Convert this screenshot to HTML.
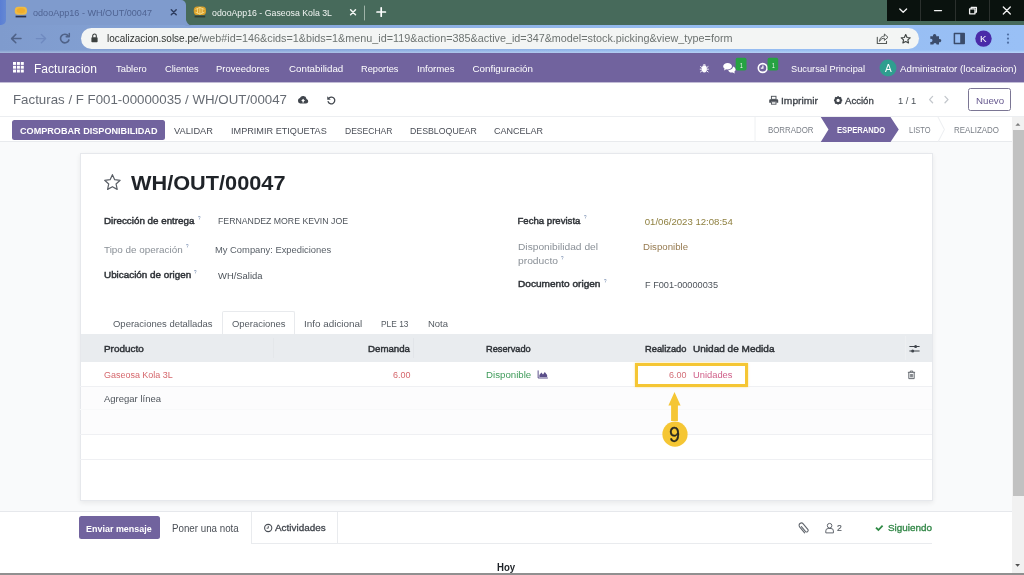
<!DOCTYPE html>
<html>
<head>
<meta charset="utf-8">
<title>odooApp16 - WH/OUT/00047</title>
<style>
*{box-sizing:border-box;margin:0;padding:0}
html,body{width:1024px;height:575px;overflow:hidden;background:#fff;font-family:"Liberation Sans",sans-serif;}
body{position:relative;color:#495057;font-size:9.4px;}
.abs{position:absolute;white-space:pre;line-height:1;transform-origin:0 0;}
svg{position:absolute;overflow:visible}
#root{position:absolute;left:0;top:0;width:1024px;height:575px;overflow:hidden;will-change:transform;background:#fff;}
#tabstrip{left:0;top:0;width:1024px;height:26px;background:#476a5b;}
#winedge{left:0;top:0;width:16px;height:26px;background:#7f9bcd;}
#tab1{left:6px;top:0;width:180px;height:26px;background:#7f9bcd;border-radius:7px 5px 0 0;}
#toolbar{left:0;top:25px;width:1024px;height:28px;background:linear-gradient(90deg,#7f9bcd 0%,#88a8dc 30%,#95bbef 65%,#99c0f6 100%);}
#omni{left:81px;top:28px;width:838px;height:21px;border-radius:11px;background:#f3f5f4;}
#winctl{left:887px;top:0;width:137px;height:21px;background:#0a120e;}
#nav{left:0;top:53px;width:1024px;height:29px;background:#71639e;border-bottom:0;box-shadow:0 1px 0 #c2bcd6;}
#cp{left:0;top:83px;width:1024px;height:34px;background:#fff;border-bottom:1px solid #eceef1;}
#sb{left:0;top:117px;width:1012px;height:25px;background:#fff;border-bottom:1px solid #e8eaed;}
#content{left:0;top:142px;width:1012px;height:369px;background:#f9fafb;}
#sheet{left:79.5px;top:152.5px;width:853px;height:348.5px;background:#fff;border:1px solid #e6e8ec;box-shadow:0 2px 5px rgba(0,0,0,.07);}
#chatter{left:0;top:511px;width:1012px;height:64px;background:#fff;border-top:1px solid #e6e8ec;}
#scroll{left:1011.6px;top:117px;width:12.4px;height:458px;background:#f1f1f1;}
#thumb{left:1013px;top:130px;width:11px;height:366px;background:#c1c1c1;}
#bottomline{left:0;top:573.2px;width:1024px;height:2px;background:#909090;}
.hl{height:1px;background:#eff0f3;left:80px;width:852px;}
</style>
</head>
<body>
<div id="root">
<!-- ===== browser chrome ===== -->
<div class="abs" id="tabstrip"></div>
<div class="abs" id="winedge"></div>
<div class="abs" style="left:0;top:0;width:6px;height:24.5px;background:linear-gradient(90deg,#5a7ed4,#6488d4);border-radius:0 0 5px 0"></div>
<div class="abs" id="tab1"></div>
<div class="abs" id="toolbar"></div>
<div class="abs" style="left:0;top:50px;width:1024px;height:3px;background:linear-gradient(180deg,rgba(255,255,255,0),rgba(255,255,255,.3))"></div>
<div class="abs" id="omni"></div>
<div class="abs" id="winctl"></div>
<!-- window control separators -->
<div class="abs" style="left:920px;top:0;width:1px;height:21px;background:#2b302d"></div>
<div class="abs" style="left:955px;top:0;width:1px;height:21px;background:#2b302d"></div>
<div class="abs" style="left:989px;top:0;width:1px;height:21px;background:#2b302d"></div>
<svg style="left:887px;top:0" width="137" height="21" viewBox="0 0 137 21" fill="none" stroke="#f2f2f2" stroke-width="1.3" stroke-linecap="round" stroke-linejoin="round">
  <path d="M12.8 9 L16.2 12.3 L19.6 9"/>
  <path d="M47.5 10.6 H54.5"/>
  <path d="M82.6 8.8 H88 V13.8 H82.6 Z"/>
  <path d="M84.2 8.6 V7.4 H89.4 V12.2 H88.2"/>
  <path d="M116.3 7 L123.3 14 M123.3 7 L116.3 14"/>
</svg>
<!-- favicons -->
<svg style="left:14px;top:5px" width="15" height="15" viewBox="0 0 15 15">
  <rect x="0.8" y="1.8" width="12.2" height="8" rx="3.6" fill="#eebb45"/>
  <ellipse cx="6.9" cy="5.6" rx="4.2" ry="2.6" fill="#f0ad2c"/>
  <rect x="1.6" y="10.7" width="10.6" height="1.7" fill="#27304f"/>
</svg>
<svg style="left:193px;top:5px" width="15" height="15" viewBox="0 0 15 15">
  <rect x="0.8" y="1.6" width="12.2" height="8.4" rx="3.6" fill="#d9a02a"/>
  <path d="M2.5 4.4 L6.9 2.4 L11.3 4.4 M2.5 7.2 L6.9 9.2 L11.3 7.2 M6.9 2.4 V9.2 M4.6 3.4 V8.2 M9.2 3.4 V8.2" stroke="#f6dc8a" stroke-width="0.9" fill="none"/>
  <rect x="1.6" y="10.7" width="10.6" height="1.7" fill="#2f3d34"/>
</svg>
<!-- tab close / new tab -->
<svg style="left:0;top:0" width="400" height="26" viewBox="0 0 400 26" fill="none" stroke-linecap="round">
  <path d="M171.3 9.8 L176.2 14.7 M176.2 9.8 L171.3 14.7" stroke="#2e3d60" stroke-width="1.5"/>
  <path d="M185.5 17 V26 H193.5 C188.5 25.5 186 23 185.5 17 Z" fill="#7f9bcd" stroke="none"/>
  <path d="M350.6 9.8 L355.5 14.7 M355.5 9.8 L350.6 14.7" stroke="#f3f6f4" stroke-width="1.5"/>
  <path d="M364.5 6 V20" stroke="#9fb3a8" stroke-width="1"/>
  <path d="M377 12 H385.4 M381.2 7.8 V16.2" stroke="#ffffff" stroke-width="1.7"/>
</svg>
<!-- toolbar icons -->
<svg style="left:0;top:25px" width="1024" height="27" viewBox="0 0 1024 27" fill="none" stroke-linecap="round" stroke-linejoin="round">
  <path d="M21 13.6 H11.8 M15.8 9.4 L11.6 13.6 L15.8 17.8" stroke="#4f6288" stroke-width="1.5"/>
  <path d="M36.4 13.6 H45.4 M41.4 9.4 L45.6 13.6 L41.4 17.8" stroke="#6f8ac0" stroke-width="1.4"/>
  <path d="M68.3 11 A4.3 4.3 0 1 0 68.9 14.9" stroke="#4f6288" stroke-width="1.6"/>
  <path d="M69.3 8.6 V11.7 H66.2" stroke="#4f6288" stroke-width="1.5"/>
  <!-- lock -->
  <rect x="91.4" y="12.2" width="6.2" height="5" rx="0.8" fill="#3c413f" stroke="none"/>
  <path d="M92.7 12.2 V10.8 A1.8 1.8 0 0 1 96.3 10.8 V12.2" stroke="#3c413f" stroke-width="1.1"/>
  <!-- share -->
  <path d="M877.3 12.2 V18.5 H886.5 V16.2" stroke="#565b59" stroke-width="1.1"/>
  <path d="M879.6 16 C879.8 12.6 882 11.2 884.4 11.2 V9 L888 12.3 L884.4 15.4 V13.3 C882.6 13.2 880.8 13.8 879.6 16 Z" stroke="#565b59" stroke-width="1"/>
  <!-- star -->
  <g transform="translate(905.7,13.9) scale(0.8) translate(-905.5,-14)"><path d="M905.5 8.6 L907.2 12.2 L911.1 12.6 L908.2 15.3 L909 19.1 L905.5 17.2 L902 19.1 L902.8 15.3 L899.9 12.6 L903.8 12.2 Z" stroke="#3f4442" stroke-width="1.45"/></g>
  <!-- puzzle -->
  <path d="M930.3 11.2 H933 A1.7 1.7 0 1 1 936.2 11.2 H939 V14 A1.7 1.7 0 1 1 939 17.2 V19.6 H936.6 A1.6 1.6 0 1 0 933.4 19.6 H930.3 V16.9 A1.6 1.6 0 1 0 930.3 13.9 Z" fill="#3b4c6b" stroke="none"/>
  <!-- side panel -->
  <rect x="954.4" y="8.6" width="9.8" height="9.8" stroke="#3b4c6b" stroke-width="1.5"/>
  <rect x="960.2" y="8.6" width="4" height="9.8" fill="#3b4c6b" stroke="none"/>
  <!-- avatar -->
  <circle cx="983.5" cy="13.6" r="8.2" fill="#4a2aa8" stroke="none"/>
  <!-- kebab -->
  <circle cx="1008" cy="9.5" r="1.1" fill="#4f6fa3" stroke="none"/>
  <circle cx="1008" cy="13.6" r="1.1" fill="#4f6fa3" stroke="none"/>
  <circle cx="1008" cy="17.7" r="1.1" fill="#4f6fa3" stroke="none"/>
</svg>

<!-- ===== odoo navbar ===== -->
<div class="abs" id="nav"></div>
<svg style="left:13px;top:62px" width="11" height="11" viewBox="0 0 11 11" fill="#fff">
  <rect x="0" y="0" width="3" height="2.9"/><rect x="3.9" y="0" width="3" height="2.9"/><rect x="7.8" y="0" width="3" height="2.9"/>
  <rect x="0" y="3.8" width="3" height="2.9"/><rect x="3.9" y="3.8" width="3" height="2.9"/><rect x="7.8" y="3.8" width="3" height="2.9"/>
  <rect x="0" y="7.6" width="3" height="2.9"/><rect x="3.9" y="7.6" width="3" height="2.9"/><rect x="7.8" y="7.6" width="3" height="2.9"/>
</svg>
<svg style="left:690px;top:52px" width="220" height="31" viewBox="0 0 220 31">
  <!-- bug -->
  <ellipse cx="14.3" cy="17" rx="2.6" ry="3.4" fill="#fff"/>
  <path d="M12.6 13.4 A1.8 1.8 0 0 1 16 13.4 Z" fill="#fff"/>
  <path d="M10.2 14.4 L12 15.6 M18.4 14.4 L16.6 15.6 M9.8 17.2 H11.8 M18.8 17.2 H16.8 M10.2 20.2 L12 18.8 M18.4 20.2 L16.6 18.8" stroke="#fff" stroke-width="0.9" fill="none"/>
  <!-- chat bubbles -->
  <path d="M33.2 14.2 C33.2 12.3 35.2 11 37.6 11 C40 11 42 12.3 42 14.2 C42 16.1 40 17.4 37.6 17.4 C37.1 17.4 36.6 17.3 36.2 17.2 L34 18.4 L34.6 16.6 C33.7 16 33.2 15.2 33.2 14.2 Z" fill="#fff"/>
  <path d="M38.2 18.2 C41 18.2 43 16.6 43 14.6 C44.6 15.1 45.6 16.2 45.6 17.5 C45.6 18.4 45.1 19.2 44.3 19.8 L44.9 21.6 L42.7 20.4 C42.3 20.5 41.9 20.5 41.4 20.5 C40 20.5 38.8 19.9 38.2 18.2 Z" fill="#fff"/>
  <rect x="45.7" y="5.7" width="10.8" height="12.9" rx="1.8" fill="#27a243"/>
  <!-- clock -->
  <circle cx="72.7" cy="16" r="4.4" fill="none" stroke="#fff" stroke-width="1.6"/>
  <path d="M72.9 13.4 V16.2 H70.8" stroke="#fff" stroke-width="1.2" fill="none"/>
  <rect x="77.6" y="5.7" width="10.6" height="12.9" rx="1.8" fill="#27a243"/>
  <!-- avatar -->
  <circle cx="198" cy="15.9" r="8.5" fill="#2f9e8f"/>
</svg>

<!-- ===== control panel ===== -->
<div class="abs" id="cp"></div>
<svg style="left:290px;top:90px" width="60" height="20" viewBox="0 0 60 20">
  <!-- cloud upload -->
  <g transform="translate(1.6,0.9) scale(0.9)"><path d="M9.6 14 H16 A2.6 2.6 0 0 0 16.6 8.9 A3.9 3.9 0 0 0 9.2 8 A3.1 3.1 0 0 0 9.6 14 Z" fill="#41464d"/>
  <path d="M12.8 8.8 L10.6 11.2 H12 V13 H13.6 V11.2 H15 Z" fill="#fff"/></g>
  <!-- undo -->
  <g transform="translate(4.5,1) scale(0.92)"><path d="M37.5 7.6 A3.7 3.7 0 1 1 36.6 11.6" fill="none" stroke="#41464d" stroke-width="1.4" stroke-linecap="round"/>
  <path d="M35.6 5.8 V9.6 H39.4 Z" fill="#41464d"/></g>
</svg>
<svg style="left:765px;top:90px" width="90" height="20" viewBox="0 0 90 20">
  <!-- printer -->
  <rect x="6.4" y="6.3" width="4.6" height="3" fill="none" stroke="#4a4f56" stroke-width="0.9"/>
  <path d="M5.2 9.2 H12.2 A1 1 0 0 1 13.2 10.2 V12.8 H11.4 V11.5 H6 V12.8 H4.2 V10.2 A1 1 0 0 1 5.2 9.2 Z" fill="#4a4f56"/>
  <rect x="6.4" y="11.8" width="4.6" height="2.4" fill="#fff" stroke="#4a4f56" stroke-width="0.9"/>
  <!-- gear -->
  <g transform="translate(73.1,10.4) scale(0.88)">
    <circle r="3" fill="none" stroke="#41464d" stroke-width="2.3"/>
    <g stroke="#41464d" stroke-width="2" stroke-linecap="butt">
      <path d="M0 -4.7 V-3.2 M0 4.7 V3.2 M-4.7 0 H-3.2 M4.7 0 H3.2"/>
      <path d="M-3.3 -3.3 L-2.3 -2.3 M3.3 3.3 L2.3 2.3 M-3.3 3.3 L-2.3 2.3 M3.3 -3.3 L2.3 -2.3"/>
    </g>
  </g>
</svg>
<svg style="left:925px;top:92px" width="30" height="16" viewBox="0 0 30 16" fill="none" stroke="#c3c7cc" stroke-width="1.3" stroke-linecap="round" stroke-linejoin="round">
  <path d="M7.6 4.4 L4.6 7.6 L7.6 10.8"/>
  <path d="M20 4.4 L23 7.6 L20 10.8"/>
</svg>
<div class="abs" style="left:967.8px;top:88.4px;width:43.5px;height:22.6px;border:1px solid #7b7694;border-radius:2.5px;background:#fff"></div>

<!-- ===== status bar ===== -->
<div class="abs" id="sb"></div>
<div class="abs" style="left:12px;top:120px;width:152.5px;height:19.5px;background:#71639e;border-radius:2.5px"></div>
<svg style="left:750px;top:117px" width="262" height="25" viewBox="0 0 262 25">
  <path d="M5 0 V25" stroke="#eef0f2" stroke-width="1"/>
  <path d="M70.75 0 H140.5 L148.75 12.5 L140.5 25 H70.75 L78.5 12.5 Z" fill="#71639e"/>
  <path d="M188 0 L194.4 12.5 L188 25" fill="none" stroke="#eceef1" stroke-width="1"/>
</svg>

<!-- ===== content ===== -->
<div class="abs" id="content"></div>
<div class="abs" id="sheet"></div>
<!-- star -->
<svg style="left:102.9px;top:172.9px" width="18.8" height="18.8" viewBox="0 0 18 18">
  <path d="M9 1.6 L11.2 6.4 L16.4 7 L12.5 10.5 L13.6 15.7 L9 13.1 L4.4 15.7 L5.5 10.5 L1.6 7 L6.8 6.4 Z" fill="none" stroke="#5a5f66" stroke-width="1.15" stroke-linejoin="round"/>
</svg>
<!-- notebook tabs -->
<div class="abs" style="left:222px;top:310.5px;width:72.5px;height:24px;background:#fff;border:1px solid #e8eaed;border-bottom:none;border-radius:2px 2px 0 0"></div>
<!-- table -->
<div class="abs" style="left:80.5px;top:334px;width:851px;height:28px;background:#e9ecef"></div>
<div class="abs" style="left:413px;top:338px;width:1px;height:20px;background:#e2e5e9"></div>
<div class="abs" style="left:273px;top:338px;width:1px;height:20px;background:#e4e7ea"></div>
<div class="abs" style="left:80.5px;top:386px;width:851px;height:48px;background:#fcfcfd"></div>
<div class="abs" style="left:80.5px;top:459px;width:851px;height:0px;background:#fcfcfd"></div>
<div class="abs hl" style="top:385.5px"></div>
<div class="abs hl" style="top:409px;background:#f8f9fa"></div>
<div class="abs hl" style="top:433.5px"></div>
<div class="abs hl" style="top:458.5px"></div>
<!-- reserved chart icon -->
<svg style="left:536.6px;top:369px" width="11.8" height="10.8" viewBox="0 0 13 12">
  <path d="M1.2 1.6 V10 H12" fill="none" stroke="#5b4f8a" stroke-width="1.1"/>
  <path d="M2.6 9 V6.6 L4.8 4 L6.6 6 L8.6 3.4 L11.2 6.8 V9 Z" fill="#5b4f8a"/>
</svg>
<!-- optional columns icon -->
<svg style="left:908px;top:343px" width="12" height="11" viewBox="0 0 12 11" fill="none" stroke="#3f444b" stroke-width="1">
  <path d="M1.4 3.5 H11.6 M1.4 8 H11.6"/>
  <circle cx="7.6" cy="3.5" r="1.5" fill="#3f444b" stroke="none"/>
  <circle cx="4.7" cy="8" r="1.5" fill="#3f444b" stroke="none"/>
</svg>
<div class="abs" style="left:905px;top:336px;width:1px;height:24px;background:#eef0f2"></div>
<!-- trash -->
<svg style="left:906.6px;top:369.8px" width="9" height="9.9" viewBox="0 0 10 11" fill="none" stroke="#555a61" stroke-width="1">
  <path d="M1 2.6 H9 M3.6 2.4 V1.2 H6.4 V2.4"/>
  <path d="M2 2.8 V9.6 H8 V2.8"/>
  <path d="M3.8 4.4 V8.2 M5 4.4 V8.2 M6.2 4.4 V8.2" stroke-width="0.8"/>
</svg>
<!-- yellow annotation -->
<div class="abs" style="left:634.5px;top:362.5px;width:113px;height:24px;border:3px solid #f5c634;box-shadow:0 0 2px rgba(245,198,52,.55)"></div>
<svg style="left:655px;top:388px" width="40" height="62" viewBox="0 0 40 62">
  <path d="M19.5 4 L25.6 17.4 H22.9 V33 H16.1 V17.4 H13.4 Z" fill="#f5c634"/>
  <circle cx="20" cy="46.2" r="12.6" fill="#f5c634"/>
</svg>

<!-- ===== chatter ===== -->
<div class="abs" id="chatter"></div>
<div class="abs" style="left:78.5px;top:516px;width:81px;height:23px;background:#71639e;border-radius:2.5px"></div>
<div class="abs" style="left:251px;top:512px;width:87px;height:32px;border:1px solid #e9ebee;border-top:none;background:#fff"></div>
<div class="abs" style="left:338px;top:543px;width:594px;height:1px;background:#e9ebee"></div>
<svg style="left:262.7px;top:521.8px" width="12" height="12" viewBox="0 0 12 12" fill="none" stroke="#4a4f56">
  <circle cx="5.2" cy="6" r="3.6" stroke-width="1.1"/>
  <path d="M5.3 3.9 V6.2 H3.6" stroke-width="0.9"/>
</svg>
<svg style="left:796.2px;top:520.6px" width="60" height="16" viewBox="0 0 60 16" fill="none" stroke="#62676e">
  <!-- paperclip -->
  <path d="M5.4 5.6 L9.6 10.6 A1.6 1.6 0 0 0 12 8.6 L7.2 2.9 A2.3 2.3 0 0 0 3.6 5.8 L8.6 11.8" stroke-width="1.1" stroke-linecap="round"/>
  <!-- user -->
  <circle cx="33.6" cy="4.7" r="2.3" stroke-width="1"/>
  <path d="M29.8 11.9 V9.9 A2.4 2.4 0 0 1 32.2 7.5 H35 A2.4 2.4 0 0 1 37.4 9.9 V11.9 Z" stroke-width="1"/>
</svg>
<svg style="left:873.6px;top:523px" width="12" height="10" viewBox="0 0 12 10">
  <path d="M2 4.6 L4.4 7 L8.6 2.6" fill="none" stroke="#2f8a45" stroke-width="1.8"/>
</svg>

<!-- ===== scrollbar ===== -->
<div class="abs" id="scroll"></div>
<div class="abs" id="thumb"></div>
<svg style="left:1012px;top:117px" width="12" height="458" viewBox="0 0 12 458">
  <path d="M3.4 8.8 L5.9 6 L8.4 8.8 Z" fill="#7d7d7d"/>
  <path d="M3.2 447 L5.6 449.8 L8 447 Z" fill="#505050"/>
</svg>
<div class="abs" id="bottomline"></div>

<!-- ===== text ===== -->
<div class="abs" style="left:33.00px;top:8px;font-size:9.8px;color:#4f6392;transform:scaleX(0.9258);">odooApp16 - WH/OUT/00047</div>
<div class="abs" style="left:212.00px;top:8px;font-size:9.8px;color:#f2f5f3;transform:scaleX(0.8955);">odooApp16 - Gaseosa Kola 3L</div>
<div class="abs" style="left:107.00px;top:33px;font-size:10.8px;color:#2f3331;transform:scaleX(0.9240);">localizacion.solse.pe</div>
<div class="abs" style="left:198.50px;top:33px;font-size:10.8px;color:#6d7371;">/web#id=146&amp;cids=1&amp;bids=1&amp;menu_id=119&amp;action=385&amp;active_id=347&amp;model=stock.picking&amp;view_type=form</div>
<div class="abs" style="left:980.30px;top:34px;font-size:9.6px;color:#ffffff;transform:scaleX(1.0146);">K</div>
<div class="abs" style="left:34.00px;top:63px;font-size:12.4px;color:#ffffff;transform:scaleX(0.9730);">Facturacion</div>
<div class="abs" style="left:115.75px;top:64px;font-size:9.8px;color:#ffffff;transform:scaleX(0.9567);">Tablero</div>
<div class="abs" style="left:164.50px;top:64px;font-size:9.8px;color:#ffffff;transform:scaleX(0.9532);">Clientes</div>
<div class="abs" style="left:216.25px;top:64px;font-size:9.8px;color:#ffffff;transform:scaleX(0.9629);">Proveedores</div>
<div class="abs" style="left:288.50px;top:64px;font-size:9.8px;color:#ffffff;transform:scaleX(0.9960);">Contabilidad</div>
<div class="abs" style="left:361.00px;top:64px;font-size:9.8px;color:#ffffff;transform:scaleX(0.9430);">Reportes</div>
<div class="abs" style="left:416.75px;top:64px;font-size:9.8px;color:#ffffff;transform:scaleX(0.9836);">Informes</div>
<div class="abs" style="left:472.50px;top:64px;font-size:9.8px;color:#ffffff;">Configuración</div>
<div class="abs" style="left:790.50px;top:64px;font-size:9.8px;color:#ffffff;transform:scaleX(0.9436);">Sucursal Principal</div>
<div class="abs" style="left:899.50px;top:64px;font-size:9.8px;color:#ffffff;transform:scaleX(0.9927);">Administrator (localizacion)</div>
<div class="abs" style="left:884.70px;top:64px;font-size:10.2px;color:#ffffff;transform:scaleX(0.9857);">A</div>
<div class="abs" style="left:739.60px;top:62px;font-size:8px;color:#ffffff;transform:scaleX(0.6288);">1</div>
<div class="abs" style="left:771.50px;top:62px;font-size:8px;color:#ffffff;transform:scaleX(0.6288);">1</div>
<div class="abs" style="left:12.50px;top:94px;font-size:12.6px;color:#666b73;transform:scaleX(1.0551);">Facturas / F F001-00000035 / WH/OUT/00047</div>
<div class="abs" style="left:781.25px;top:96px;font-size:9.8px;color:#3e434a;transform:scaleX(1.0459);-webkit-text-stroke:0.3px #3e434a;">Imprimir</div>
<div class="abs" style="left:845.00px;top:96px;font-size:9.8px;color:#3e434a;transform:scaleX(0.9777);-webkit-text-stroke:0.3px #3e434a;">Acción</div>
<div class="abs" style="left:898.25px;top:96px;font-size:9.8px;color:#495057;transform:scaleX(0.9566);">1 / 1</div>
<div class="abs" style="left:976.00px;top:96px;font-size:9.8px;color:#66598f;transform:scaleX(0.9919);">Nuevo</div>
<div class="abs" style="left:19.50px;top:127px;font-size:9.2px;color:#ffffff;font-weight:bold;transform:scaleX(0.9903);">COMPROBAR DISPONIBILIDAD</div>
<div class="abs" style="left:174.25px;top:127px;font-size:9.2px;color:#4a4e57;transform:scaleX(1.0093);">VALIDAR</div>
<div class="abs" style="left:231.00px;top:127px;font-size:9.2px;color:#4a4e57;transform:scaleX(0.9942);">IMPRIMIR ETIQUETAS</div>
<div class="abs" style="left:344.75px;top:127px;font-size:9.2px;color:#4a4e57;transform:scaleX(0.9302);">DESECHAR</div>
<div class="abs" style="left:409.75px;top:127px;font-size:9.2px;color:#4a4e57;transform:scaleX(0.9542);">DESBLOQUEAR</div>
<div class="abs" style="left:494.00px;top:127px;font-size:9.2px;color:#4a4e57;transform:scaleX(0.9791);">CANCELAR</div>
<div class="abs" style="left:767.60px;top:126px;font-size:8.3px;color:#7a7f87;transform:scaleX(0.9488);">BORRADOR</div>
<div class="abs" style="left:836.60px;top:126px;font-size:8.3px;color:#ffffff;font-weight:bold;transform:scaleX(0.9161);">ESPERANDO</div>
<div class="abs" style="left:908.50px;top:126px;font-size:8.3px;color:#7a7f87;transform:scaleX(0.9023);">LISTO</div>
<div class="abs" style="left:953.50px;top:126px;font-size:8.3px;color:#7a7f87;transform:scaleX(0.9568);">REALIZADO</div>
<div class="abs" style="left:131.25px;top:174px;font-size:19.6px;color:#1f2328;font-weight:bold;transform:scaleX(1.1084);">WH/OUT/00047</div>
<div class="abs" style="left:103.75px;top:216px;font-size:9.6px;color:#2e3237;transform:scaleX(1.0217);-webkit-text-stroke:0.45px #2e3237;">Dirección de entrega</div>
<div class="abs" style="left:197.50px;top:216px;font-size:5.6px;color:#6a83a8;transform:scaleX(0.8000);">?</div>
<div class="abs" style="left:218.00px;top:216px;font-size:9.4px;color:#4d535a;transform:scaleX(0.9312);">FERNANDEZ MORE KEVIN JOE</div>
<div class="abs" style="left:103.75px;top:245px;font-size:9.6px;color:#8a9097;transform:scaleX(1.0300);">Tipo de operación</div>
<div class="abs" style="left:185.50px;top:244px;font-size:5.6px;color:#6a83a8;transform:scaleX(0.8000);">?</div>
<div class="abs" style="left:215.00px;top:245px;font-size:9.4px;color:#596068;">My Company: Expediciones</div>
<div class="abs" style="left:103.75px;top:270px;font-size:9.6px;color:#2e3237;transform:scaleX(1.0287);-webkit-text-stroke:0.45px #2e3237;">Ubicación de origen</div>
<div class="abs" style="left:194.00px;top:270px;font-size:5.6px;color:#6a83a8;transform:scaleX(0.8000);">?</div>
<div class="abs" style="left:218.00px;top:271px;font-size:9.4px;color:#4d535a;transform:scaleX(1.0046);">WH/Salida</div>
<div class="abs" style="left:517.50px;top:216px;font-size:9.6px;color:#2e3237;-webkit-text-stroke:0.45px #2e3237;">Fecha prevista</div>
<div class="abs" style="left:583.50px;top:215px;font-size:5.6px;color:#6a83a8;transform:scaleX(0.8000);">?</div>
<div class="abs" style="left:644.75px;top:217px;font-size:9.6px;color:#8f8040;">01/06/2023 12:08:54</div>
<div class="abs" style="left:517.50px;top:242px;font-size:9.6px;color:#8a9097;transform:scaleX(1.0638);">Disponibilidad del</div>
<div class="abs" style="left:517.50px;top:256px;font-size:9.6px;color:#8a9097;transform:scaleX(1.0711);">producto</div>
<div class="abs" style="left:560.50px;top:256px;font-size:5.6px;color:#6a83a8;transform:scaleX(0.8000);">?</div>
<div class="abs" style="left:642.50px;top:242px;font-size:9.6px;color:#967a50;transform:scaleX(1.0042);">Disponible</div>
<div class="abs" style="left:517.50px;top:279px;font-size:9.6px;color:#2e3237;transform:scaleX(1.0522);-webkit-text-stroke:0.45px #2e3237;">Documento origen</div>
<div class="abs" style="left:603.50px;top:279px;font-size:5.6px;color:#6a83a8;transform:scaleX(0.8000);">?</div>
<div class="abs" style="left:645.00px;top:280px;font-size:9.4px;color:#4d535a;transform:scaleX(0.9792);">F F001-00000035</div>
<div class="abs" style="left:112.90px;top:319px;font-size:9.6px;color:#555b62;transform:scaleX(0.9880);">Operaciones detalladas</div>
<div class="abs" style="left:231.50px;top:319px;font-size:9.6px;color:#555b62;transform:scaleX(0.9833);">Operaciones</div>
<div class="abs" style="left:303.75px;top:319px;font-size:9.6px;color:#555b62;transform:scaleX(1.0301);">Info adicional</div>
<div class="abs" style="left:381.25px;top:319px;font-size:9.6px;color:#555b62;transform:scaleX(0.8734);">PLE 13</div>
<div class="abs" style="left:428.25px;top:319px;font-size:9.6px;color:#555b62;transform:scaleX(0.9869);">Nota</div>
<div class="abs" style="left:104.00px;top:344px;font-size:9.7px;color:#2e3237;transform:scaleX(1.0250);-webkit-text-stroke:0.45px #2e3237;">Producto</div>
<div class="abs" style="left:368.00px;top:344px;font-size:9.7px;color:#2e3237;-webkit-text-stroke:0.45px #2e3237;">Demanda</div>
<div class="abs" style="left:486.25px;top:344px;font-size:9.7px;color:#2e3237;transform:scaleX(0.9550);-webkit-text-stroke:0.45px #2e3237;">Reservado</div>
<div class="abs" style="left:644.50px;top:344px;font-size:9.7px;color:#2e3237;transform:scaleX(0.9630);-webkit-text-stroke:0.45px #2e3237;">Realizado</div>
<div class="abs" style="left:692.50px;top:344px;font-size:9.7px;color:#2e3237;transform:scaleX(1.0364);-webkit-text-stroke:0.45px #2e3237;">Unidad de Medida</div>
<div class="abs" style="left:103.75px;top:370px;font-size:9.6px;color:#d5676c;transform:scaleX(0.9340);">Gaseosa Kola 3L</div>
<div class="abs" style="left:392.50px;top:370px;font-size:9.6px;color:#d5676c;transform:scaleX(0.9365);">6.00</div>
<div class="abs" style="left:486.25px;top:370px;font-size:9.6px;color:#3f9b5a;transform:scaleX(1.0098);">Disponible</div>
<div class="abs" style="left:669.00px;top:370px;font-size:9.6px;color:#d36f78;transform:scaleX(0.9365);">6.00</div>
<div class="abs" style="left:692.50px;top:370px;font-size:9.6px;color:#d0608a;transform:scaleX(0.9742);">Unidades</div>
<div class="abs" style="left:103.75px;top:394px;font-size:9.6px;color:#4f555c;transform:scaleX(0.9894);">Agregar línea</div>
<div class="abs" style="left:669.40px;top:425px;font-size:21.5px;color:#2a2a22;transform:scaleX(0.9191);-webkit-text-stroke:0.3px #2a2a22;">9</div>
<div class="abs" style="left:85.75px;top:524px;font-size:9.6px;color:#ffffff;font-weight:bold;transform:scaleX(0.9339);">Enviar mensaje</div>
<div class="abs" style="left:171.50px;top:524px;font-size:10.2px;color:#4a4f56;transform:scaleX(0.9581);">Poner una nota</div>
<div class="abs" style="left:274.60px;top:523px;font-size:9.8px;color:#40454c;transform:scaleX(1.0098);-webkit-text-stroke:0.3px #40454c;">Actividades</div>
<div class="abs" style="left:836.80px;top:523px;font-size:9.6px;color:#555b62;transform:scaleX(0.8982);-webkit-text-stroke:0.2px #555b62;">2</div>
<div class="abs" style="left:888.00px;top:523px;font-size:9.6px;color:#35894a;transform:scaleX(1.0307);-webkit-text-stroke:0.35px #35894a;">Siguiendo</div>
<div class="abs" style="left:496.75px;top:562px;font-size:10.6px;color:#1f2328;font-weight:bold;transform:scaleX(0.9068);">Hoy</div>
</div>
</body>
</html>
